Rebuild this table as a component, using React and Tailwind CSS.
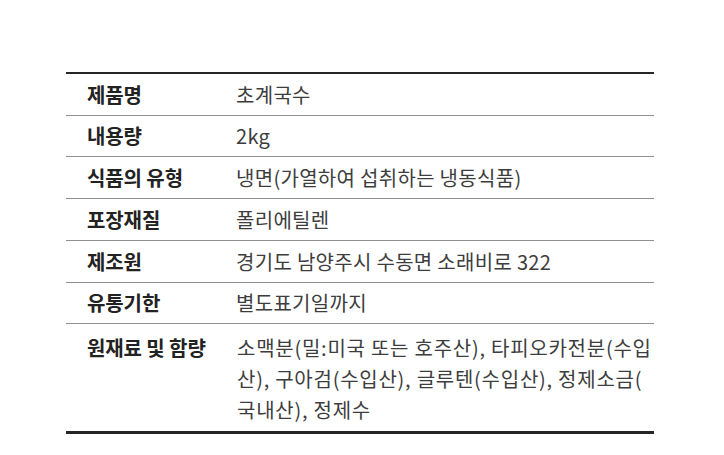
const rows = [
  { label: "제품명", value: "초계국수", h: "h-[42px]" },
  { label: "내용량", value: "2kg", h: "h-[41px]" },
  { label: "식품의 유형", value: "냉면(가열하여 섭취하는 냉동식품)", h: "h-[42px]" },
  { label: "포장재질", value: "폴리에틸렌", h: "h-[42px]" },
  { label: "제조원", value: "경기도 남양주시 수동면 소래비로 322", h: "h-[42px]" },
  { label: "유통기한", value: "별도표기일까지", h: "h-[41px]" },
];

export default function App() {
  return (
    <div
      className="w-[724px] h-[455px] bg-white pt-[72px] pl-[66px]"
      style={{ fontFamily: '"Noto Sans CJK KR", "Noto Sans", sans-serif' }}
    >
      <div className="w-[588px] border-t-2 border-b-[3px] border-[#262626]">
        {rows.map((r) => (
          <div
            key={r.label}
            className={`flex items-center border-b border-[#8f8f8f] ${r.h}`}
          >
            <div className="w-[170px] shrink-0 pl-[21px] text-[20px] font-semibold tracking-[-0.1px] text-[#222]">
              {r.label}
            </div>
            <div className="text-[20px] tracking-[0.3px] text-[#3d3d3d]">{r.value}</div>
          </div>
        ))}
        <div className="flex pt-[8px] pb-[6px]">
          <div className="w-[170px] shrink-0 pl-[21px] text-[20px] leading-[31px] font-semibold tracking-[-0.1px] text-[#222]">
            원재료 및 함량
          </div>
          <div className="pl-[1px] text-[20px] leading-[31px] tracking-[0.75px] text-[#3d3d3d] whitespace-nowrap">
            소맥분(밀:미국 또는 호주산), 타피오카전분(수입
            <br />
            산), 구아검(수입산), 글루텐(수입산), 정제소금(
            <br />
            국내산), 정제수
          </div>
        </div>
      </div>
    </div>
  );
}
